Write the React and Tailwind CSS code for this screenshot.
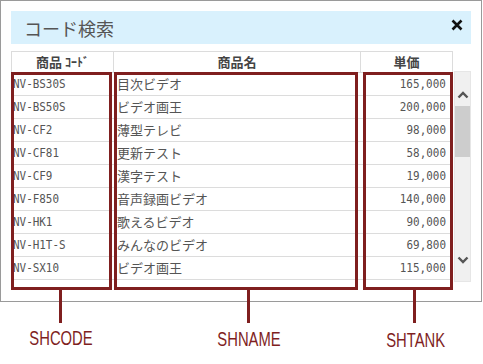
const rows = [
  ['NV-BS30S', '目次ビデオ', '165,000'],
  ['NV-BS50S', 'ビデオ画王', '200,000'],
  ['NV-CF2', '薄型テレビ', '98,000'],
  ['NV-CF81', '更新テスト', '58,000'],
  ['NV-CF9', '漢字テスト', '19,000'],
  ['NV-F850', '音声録画ビデオ', '140,000'],
  ['NV-HK1', '歌えるビデオ', '90,000'],
  ['NV-H1T-S', 'みんなのビデオ', '69,800'],
  ['NV-SX10', 'ビデオ画王', '115,000'],
  ['', '', ''],
]

const jp = { fontFamily: '"Noto Sans CJK JP", "Noto Sans", sans-serif' }
const mono = { fontFamily: '"DejaVu Sans Mono", "Liberation Mono", monospace' }
const label = { fontFamily: '"Liberation Sans", Arial, sans-serif' }

function Chevron({ down }) {
  return (
    <svg width="12" height="8" viewBox="0 0 12 8" className="block">
      <path
        d={down ? 'M1.5 1.5 L6 6 L10.5 1.5' : 'M1.5 6.5 L6 2 L10.5 6.5'}
        fill="none"
        stroke="#555"
        strokeWidth="2.4"
      />
    </svg>
  )
}

export default function App() {
  return (
    <div className="relative h-[364px] w-[483px] overflow-hidden bg-white">
      <div className="h-[302px] w-[482px] border border-[#9a9a9a] px-[10px] pt-[10px]">
        <div className="flex h-[33px] w-[460px] items-center justify-between bg-[#d9f1fd] pl-[13px] pr-[8px]">
          <span className="text-[18px] leading-none text-[#555]" style={jp}>
            コード検索
          </span>
          <svg width="12" height="12" viewBox="0 0 12 12" className="mb-[6px]">
            <path d="M1.5 1.5 L10.5 10.5 M10.5 1.5 L1.5 10.5" stroke="#111" strokeWidth="2.6" />
          </svg>
        </div>

        <div className="mt-[7px] flex">
          <div className="w-[443px]">
            <div
              className="flex h-[21px] border-t border-r border-[#dcdcdc] text-[13px] font-bold leading-[20px] text-[#444]"
              style={jp}
            >
              <div className="w-[103px] border-l border-r border-[#dcdcdc] text-center">
                商品 <span className="text-[12px]">ｺｰﾄﾞ</span>
              </div>
              <div className="w-[247px] border-r border-[#dcdcdc] text-center">商品名</div>
              <div className="flex-1 text-center">単価</div>
            </div>
            <div className="h-[212px] overflow-hidden">
              {rows.map((r, i) => (
                <div key={i} className="flex h-[23px] border-t border-[#dcdcdc] text-[#555]">
                  <div className="w-[103px] pl-[2px] text-[13px] leading-[22px]" style={mono}>
                    <span className="inline-block origin-left scale-x-[0.84]">{r[0]}</span>
                  </div>
                  <div className="w-[247px] pl-[3px] text-[13px] leading-[22px]" style={jp}>
                    {r[1]}
                  </div>
                  <div className="flex-1 pr-[7px] text-right text-[13px] leading-[22px]" style={mono}>
                    <span className="inline-block origin-right scale-x-[0.84]">{r[2]}</span>
                  </div>
                </div>
              ))}
            </div>
          </div>
          <div className="ml-[1px] mt-[20px] flex h-[211px] w-[17px] flex-col items-center border border-[#e6e6e6] bg-[#f0f0f0]">
            <div className="mt-[19px]">
              <Chevron />
            </div>
            <div className="mt-[7px] h-[51px] w-[15px] bg-[#cdcdcd]" />
            <div className="mt-auto mb-[17px]">
              <Chevron down />
            </div>
          </div>
        </div>
      </div>

      {/* annotation boxes */}
      <div className="absolute left-[11px] top-[72px] h-[218px] w-[101px] border-[3px] border-[#7f1f1f]" />
      <div className="absolute left-[114px] top-[72px] h-[218px] w-[244px] border-[3px] border-[#7f1f1f]" />
      <div className="absolute left-[363px] top-[72px] h-[218px] w-[90px] border-[3px] border-[#7f1f1f]" />
      <div className="absolute left-[59px] top-[290px] h-[33px] w-[3px] bg-[#7f1f1f]" />
      <div className="absolute left-[247px] top-[290px] h-[33px] w-[3px] bg-[#7f1f1f]" />
      <div className="absolute left-[413px] top-[290px] h-[33px] w-[3px] bg-[#7f1f1f]" />

      <div className="flex h-[62px] text-[20px] leading-none text-[#7f1f1f]" style={label}>
        <div className="mt-[26px] w-[122px] scale-x-[0.74] text-center">SHCODE</div>
        <div className="mt-[27px] w-[254px] scale-x-[0.74] text-center">SHNAME</div>
        <div className="mt-[28px] w-[78px] scale-x-[0.74] text-center">SHTANK</div>
      </div>
    </div>
  )
}
